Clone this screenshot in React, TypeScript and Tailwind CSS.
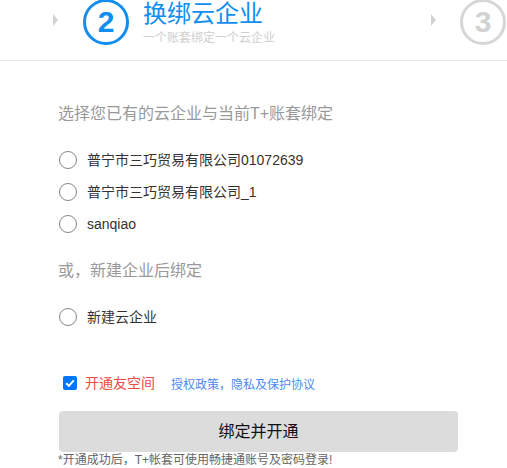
const companies = ["普宁市三巧贸易有限公司01072639", "普宁市三巧贸易有限公司_1", "sanqiao"];

function Arrow({ className = "" }: { className?: string }) {
  return (
    <div
      className={`mt-[14px] h-0 w-0 shrink-0 border-y-[6px] border-l-[5px] border-y-transparent border-l-[#d2d2d2] ${className}`}
    />
  );
}

function Radio({ label }: { label: string }) {
  return (
    <label className="flex h-[32px] items-center">
      <span className="ml-px h-[18px] w-[18px] shrink-0 rounded-full border border-[#858585] bg-white" />
      <span className="ml-[10px] text-[14px] leading-[20px] text-[#333]">{label}</span>
    </label>
  );
}

export default function App() {
  return (
    <div className="h-[468px] w-[507px] overflow-hidden bg-white font-['Liberation_Sans','Noto_Sans_CJK_SC',sans-serif]">
      <div className="flex h-[61px] items-start overflow-hidden border-b border-[#e6e6e6] pl-[53px]">
        <Arrow />
        <div className="-mt-px ml-[25px] flex h-[46px] w-[46px] shrink-0 items-center justify-center rounded-full border-[3px] border-[#118ef0] text-[30px] font-bold leading-none text-[#118ef0]">
          2
        </div>
        <div className="ml-[14px] w-[274px] shrink-0">
          <div className="text-[24px] leading-[28px] text-[#118ef0]">换绑云企业</div>
          <div className="mt-[2px] text-[12px] leading-[16px] text-[#cfcfcf]">一个账套绑定一个云企业</div>
        </div>
        <Arrow className="ml-[14px]" />
        <div className="-mt-px ml-[24px] flex h-[46px] w-[46px] shrink-0 items-center justify-center rounded-full border-[3px] border-[#d6d6d6] text-[30px] font-bold leading-none text-[#d2d2d2]">
          3
        </div>
      </div>

      <div className="pl-[58px]">
        <div className="mt-[43px] text-[16px] leading-[20px] text-[#999]">选择您已有的云企业与当前T+账套绑定</div>
        <div className="mt-[20px]">
          {companies.map((c) => (
            <Radio key={c} label={c} />
          ))}
        </div>

        <div className="mt-[21px] text-[16px] leading-[20px] text-[#999]">或，新建企业后绑定</div>
        <div className="mt-[20px]">
          <Radio label="新建云企业" />
        </div>

        <div className="mt-[40px] flex h-[20px] items-center">
          <span className="ml-[5px] flex h-[14px] w-[14px] shrink-0 items-center justify-center rounded-[2px] bg-[#0075ff]">
            <svg viewBox="0 0 14 14" className="h-[14px] w-[14px]">
              <path d="M3.2 7.2 L5.9 9.8 L10.8 4.3" fill="none" stroke="#fff" strokeWidth="2" />
            </svg>
          </span>
          <span className="ml-[8px] text-[14px] text-[#f04a46]">开通友空间</span>
          <span className="ml-[16px] mt-[4px] text-[12px] text-[#4c8af0]">授权政策，隐私及保护协议</span>
        </div>

        <button className="ml-px mt-[18px] flex h-[41px] w-[399px] items-center justify-center rounded-[4px] bg-[#dcdcdc] text-[16px] text-[#111]">
          绑定并开通
        </button>
        <div className="text-[12px] leading-[16px] text-[#666]">*开通成功后，T+帐套可使用畅捷通账号及密码登录!</div>
      </div>
    </div>
  );
}
